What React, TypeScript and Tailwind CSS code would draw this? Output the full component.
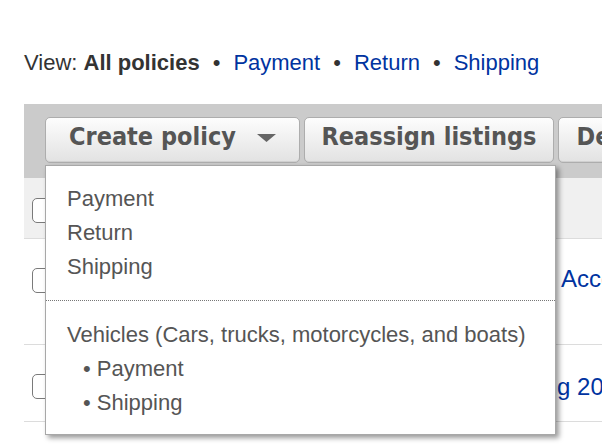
import React from "react";

const sans = "font-['Liberation_Sans','Arial',sans-serif]";
const btnFont = "font-['DejaVu_Sans_Condensed','DejaVu_Sans',sans-serif] font-stretch-condensed";

function Bullet({ className = "" }: { className?: string }) {
    return <span className={`inline-block ${className}`}>•</span>;
}

function Checkbox({ className = "" }: { className?: string }) {
    return <div className={`h-[25px] w-[25px] shrink-0 rounded-[5px] border-[1.5px] border-[#7a7a7a] bg-white ${className}`} />;
}

function ToolButton({ label, width, caret }: { label: string; width: string; caret?: boolean }) {
    return (
        <div
            className={`flex h-[46px] shrink-0 justify-center rounded-[5px] border border-[#adadad] bg-gradient-to-b from-[#fdfdfd] to-[#e2e2e2] pt-[6px] shadow-[inset_0_-1px_0_#d0d0d0] ${width}`}
        >
            <span className={`${btnFont} whitespace-nowrap text-[25px] leading-[25px] font-bold text-[#555]`}>{label}</span>
            {caret && (
                <svg className="mt-[10px] ml-[21px]" width="19" height="8" viewBox="0 0 19 8">
                    <polygon points="0,0 19,0 9.5,8" fill="#666" />
                </svg>
            )}
        </div>
    );
}

export default function App() {
    return (
        <div className={`relative h-[446px] w-[602px] overflow-hidden bg-white ${sans}`}>
            <div className="whitespace-nowrap pt-[52px] pl-[24px] text-[22px] leading-[22px] text-[#333]">
                View: <span className="font-bold">All policies</span>
                <Bullet className="mx-[13px]" />
                <span className="text-[#0033a0]">Payment</span>
                <Bullet className="mx-[13px]" />
                <span className="text-[#0033a0]">Return</span>
                <Bullet className="mx-[13px]" />
                <span className="text-[#0033a0]">Shipping</span>
            </div>

            <div className="mt-[30px] ml-[24px]">
                {/* toolbar */}
                <div className="flex h-[74px] gap-[4px] bg-[#cbcbcb] pt-[13px] pl-[21px]">
                    <ToolButton label="Create policy" width="w-[255px]" caret />
                    <ToolButton label="Reassign listings" width="w-[250px]" />
                    <ToolButton label="Delete" width="w-[120px]" />
                </div>

                {/* table */}
                <div className="flex h-[61px] border-b border-[#dcdcdc] bg-[#f0f0f0] pl-[8px]">
                    <Checkbox className="mt-[20px]" />
                </div>
                <div className="flex h-[106px] items-start border-b border-[#dcdcdc] pl-[8px]">
                    <Checkbox className="mt-[29px]" />
                    <span className="mt-[28px] ml-[504px] whitespace-nowrap text-[24px] leading-[24px] text-[#0033a0]">Accepted payments</span>
                </div>
                <div className="flex h-[77px] items-start border-b border-[#dcdcdc] pl-[8px]">
                    <Checkbox className="mt-[29px]" />
                    <span className="mt-[30px] ml-[420px] whitespace-nowrap text-[24px] leading-[24px] text-[#0033a0]">Shipping 2020</span>
                </div>
            </div>

            {/* dropdown menu */}
            <div className="absolute top-[165px] left-[45px] w-[511px] border border-[#a8a8a8] bg-white text-[22px] leading-[34px] text-[#555] shadow-[3px_3px_5px_rgba(0,0,0,0.4)]">
                <div className="border-b border-dotted border-[#777] pt-[16px] pb-[16px] pl-[21px]">
                    <div>Payment</div>
                    <div>Return</div>
                    <div>Shipping</div>
                </div>
                <div className="pt-[17px] pb-[14px] pl-[21px]">
                    <div className="whitespace-nowrap">Vehicles (Cars, trucks, motorcycles, and boats)</div>
                    <div className="pl-[16px]">• Payment</div>
                    <div className="pl-[16px]">• Shipping</div>
                </div>
            </div>
        </div>
    );
}
